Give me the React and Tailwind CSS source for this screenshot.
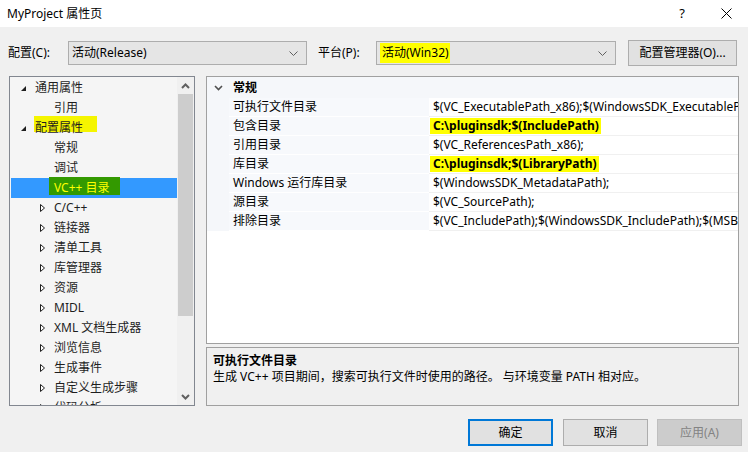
import React from "react";

const DownChevron = ({ color = "#606060" }) => (
  <svg width="9" height="5" viewBox="0 0 9 5">
    <polyline points="0.5,0.5 4.5,4.5 8.5,0.5" fill="none" stroke={color} strokeWidth="1" />
  </svg>
);

const Dropdown = ({ width, children }) => (
  <div className={`${width} h-[24px] bg-[#e5e5e5] border border-[#adadad] flex items-center pl-[3px] pr-[8px]`}>
    <div className="flex-1 flex items-center">{children}</div>
    <DownChevron />
  </div>
);

const Expanded = () => (
  <svg width="5" height="5" viewBox="0 0 5 5">
    <polygon points="0,5 5,5 5,0" fill="#1e1e1e" />
  </svg>
);

const Collapsed = () => (
  <svg width="5" height="8" viewBox="0 0 5 8">
    <polygon points="0.5,0.5 4.5,4 0.5,7.5" fill="white" stroke="#1e1e1e" strokeWidth="1" />
  </svg>
);

const treeItems = [
  { t: "通用属性", lv: 0 },
  { t: "引用", lv: 1, leaf: true },
  { t: "配置属性", lv: 0, mark: true },
  { t: "常规", lv: 1, leaf: true },
  { t: "调试", lv: 1, leaf: true },
  { t: "VC++ 目录", lv: 1, leaf: true, sel: true },
  { t: "C/C++", lv: 1 },
  { t: "链接器", lv: 1 },
  { t: "清单工具", lv: 1 },
  { t: "库管理器", lv: 1 },
  { t: "资源", lv: 1 },
  { t: "MIDL", lv: 1 },
  { t: "XML 文档生成器", lv: 1 },
  { t: "浏览信息", lv: 1 },
  { t: "生成事件", lv: 1 },
  { t: "自定义生成步骤", lv: 1 },
  { t: "代码分析", lv: 1 },
];

const TreeRow = ({ item }) => {
  if (item.lv === 0) {
    return (
      <div className="h-[20px] shrink-0 flex items-center pl-[11px] relative">
        {item.mark && <div className="absolute left-[24px] top-[-2px] w-[63px] h-[16px] bg-[#f5f500]" />}
        <div className="w-[14px] flex items-center relative"><Expanded /></div>
        <span className="relative text-[#1e1e1e]">{item.t}</span>
      </div>
    );
  }
  if (item.sel) {
    return (
      <div className="h-[20px] shrink-0 flex items-center ml-[1px] pl-[43px] bg-[#3399ff] relative">
        <div className="absolute left-[38px] top-[-1px] w-[71px] h-[18px] bg-[#339900]" />
        <span className="relative text-[#ffff00]">{item.t}</span>
      </div>
    );
  }
  return (
    <div className="h-[20px] shrink-0 flex items-center pl-[30px]">
      <div className="w-[14px] flex items-center">{!item.leaf && <Collapsed />}</div>
      <span className="text-[#1e1e1e]">{item.t}</span>
    </div>
  );
};

const gridRows = [
  { n: "可执行文件目录", v: "$(VC_ExecutablePath_x86);$(WindowsSDK_ExecutablePath);$(VS_ExecutablePath)" },
  { n: "包含目录", v: "C:\\pluginsdk;$(IncludePath)", hl: true },
  { n: "引用目录", v: "$(VC_ReferencesPath_x86);" },
  { n: "库目录", v: "C:\\pluginsdk;$(LibraryPath)", hl: true },
  { n: "Windows 运行库目录", v: "$(WindowsSDK_MetadataPath);" },
  { n: "源目录", v: "$(VC_SourcePath);" },
  { n: "排除目录", v: "$(VC_IncludePath);$(WindowsSDK_IncludePath);$(MSBuild_ExecutablePath)" },
];

export default function App() {
  return (
    <div className="w-[748px] h-[452px] bg-[#f0f0f0] flex flex-col text-[12px] leading-none text-black font-['Noto_Sans','Noto_Sans_CJK_SC',sans-serif] overflow-hidden">
      {/* title bar */}
      <div className="h-[27px] shrink-0 bg-white flex items-center pl-[7px]">
        <span className="flex-1">MyProject 属性页</span>
        <span className="text-[13px] mr-[36px]">?</span>
        <svg width="11" height="11" viewBox="0 0 11 11" className="mr-[16px]">
          <line x1="0.5" y1="0.5" x2="10.5" y2="10.5" stroke="#000" strokeWidth="1" />
          <line x1="10.5" y1="0.5" x2="0.5" y2="10.5" stroke="#000" strokeWidth="1" />
        </svg>
      </div>

      {/* config row */}
      <div className="h-[26px] mt-[13px] shrink-0 flex items-center">
        <span className="w-[68px] pl-[8px]">配置(C):</span>
        <Dropdown width="w-[239px]">
          <span>活动(Release)</span>
        </Dropdown>
        <span className="w-[58px] ml-[11px]">平台(P):</span>
        <Dropdown width="w-[240px]">
          <span className="bg-[#ffff00] pl-[2px] pr-[1px] py-[4px]">活动(Win32)</span>
        </Dropdown>
        <div className="ml-[12px] w-[109px] h-[26px] bg-[#e1e1e1] border border-[#adadad] flex items-center justify-center">
          配置管理器(O)...
        </div>
      </div>

      {/* main */}
      <div className="mt-[10px] h-[330px] shrink-0 flex">
        {/* tree */}
        <div className="ml-[9px] w-[186px] h-[330px] border border-[#828790] bg-[#f5f5f5] flex">
          <div className="flex-1 flex flex-col overflow-hidden pt-[1px]">
            {treeItems.map((it, i) => (
              <TreeRow key={i} item={it} />
            ))}
          </div>
          <div className="w-[17px] bg-[#f0f0f0] flex flex-col">
            <div className="h-[17px] flex items-center justify-center">
              <svg width="9" height="6" viewBox="0 0 9 6">
                <polyline points="1,5 4.5,1.5 8,5" fill="none" stroke="#606060" strokeWidth="2" />
              </svg>
            </div>
            <div className="h-[222px] mx-[1px] bg-[#cdcdcd]" />
            <div className="flex-1" />
            <div className="h-[17px] flex items-center justify-center">
              <svg width="9" height="6" viewBox="0 0 9 6">
                <polyline points="1,1 4.5,4.5 8,1" fill="none" stroke="#606060" strokeWidth="2" />
              </svg>
            </div>
          </div>
        </div>

        {/* right side */}
        <div className="ml-[11px] w-[533px] flex flex-col">
          <div className="h-[268px] border border-[#a0a0a0] bg-white flex flex-col overflow-hidden">
            <div className="h-[21px] shrink-0 bg-[#f5f7fa] flex items-center">
              <div className="w-[22px] flex items-center justify-center pl-[1px]">
                <svg width="9" height="6" viewBox="0 0 9 6">
                  <polyline points="1,1 4.5,4.5 8,1" fill="none" stroke="#505050" strokeWidth="1.6" />
                </svg>
              </div>
              <span className="pl-[4px] font-bold">常规</span>
            </div>
            {gridRows.map((r, i) => (
              <div key={i} className="h-[19px] shrink-0 flex">
                <div className="w-[22px] bg-[#f5f7fa]" />
                <div className="w-[200px] bg-[#f7f9fc] border-b border-white flex items-center pl-[4px] whitespace-nowrap">
                  {r.n}
                </div>
                <div className="flex-1 min-w-0 bg-white border-b border-[#f0f0f0] flex items-center pl-[4px] whitespace-nowrap overflow-hidden">
                  {r.hl ? (
                    <span className="bg-[#ffff00] font-bold -ml-[3px] pl-[3px] pr-[2px] py-[2px]">{r.v}</span>
                  ) : (
                    <span>{r.v}</span>
                  )}
                </div>
              </div>
            ))}
          </div>
          <div className="mt-[3px] h-[59px] border border-[#a0a0a0] bg-[#f0f0f0] pl-[6px] pt-[7px] flex flex-col gap-[4px]">
            <span className="font-bold">可执行文件目录</span>
            <span>生成 VC++ 项目期间，搜索可执行文件时使用的路径。 与环境变量 PATH 相对应。</span>
          </div>
        </div>
      </div>

      {/* buttons */}
      <div className="mt-[13px] flex pl-[468px]">
        <div className="w-[85px] h-[27px] border-2 border-[#0078d7] bg-[#e1e1e1] flex items-center justify-center">确定</div>
        <div className="ml-[10px] w-[85px] h-[27px] border border-[#adadad] bg-[#e1e1e1] flex items-center justify-center">取消</div>
        <div className="ml-[9px] w-[85px] h-[27px] border border-[#bfbfbf] bg-[#cccccc] text-[#838383] flex items-center justify-center">应用(A)</div>
      </div>
    </div>
  );
}
